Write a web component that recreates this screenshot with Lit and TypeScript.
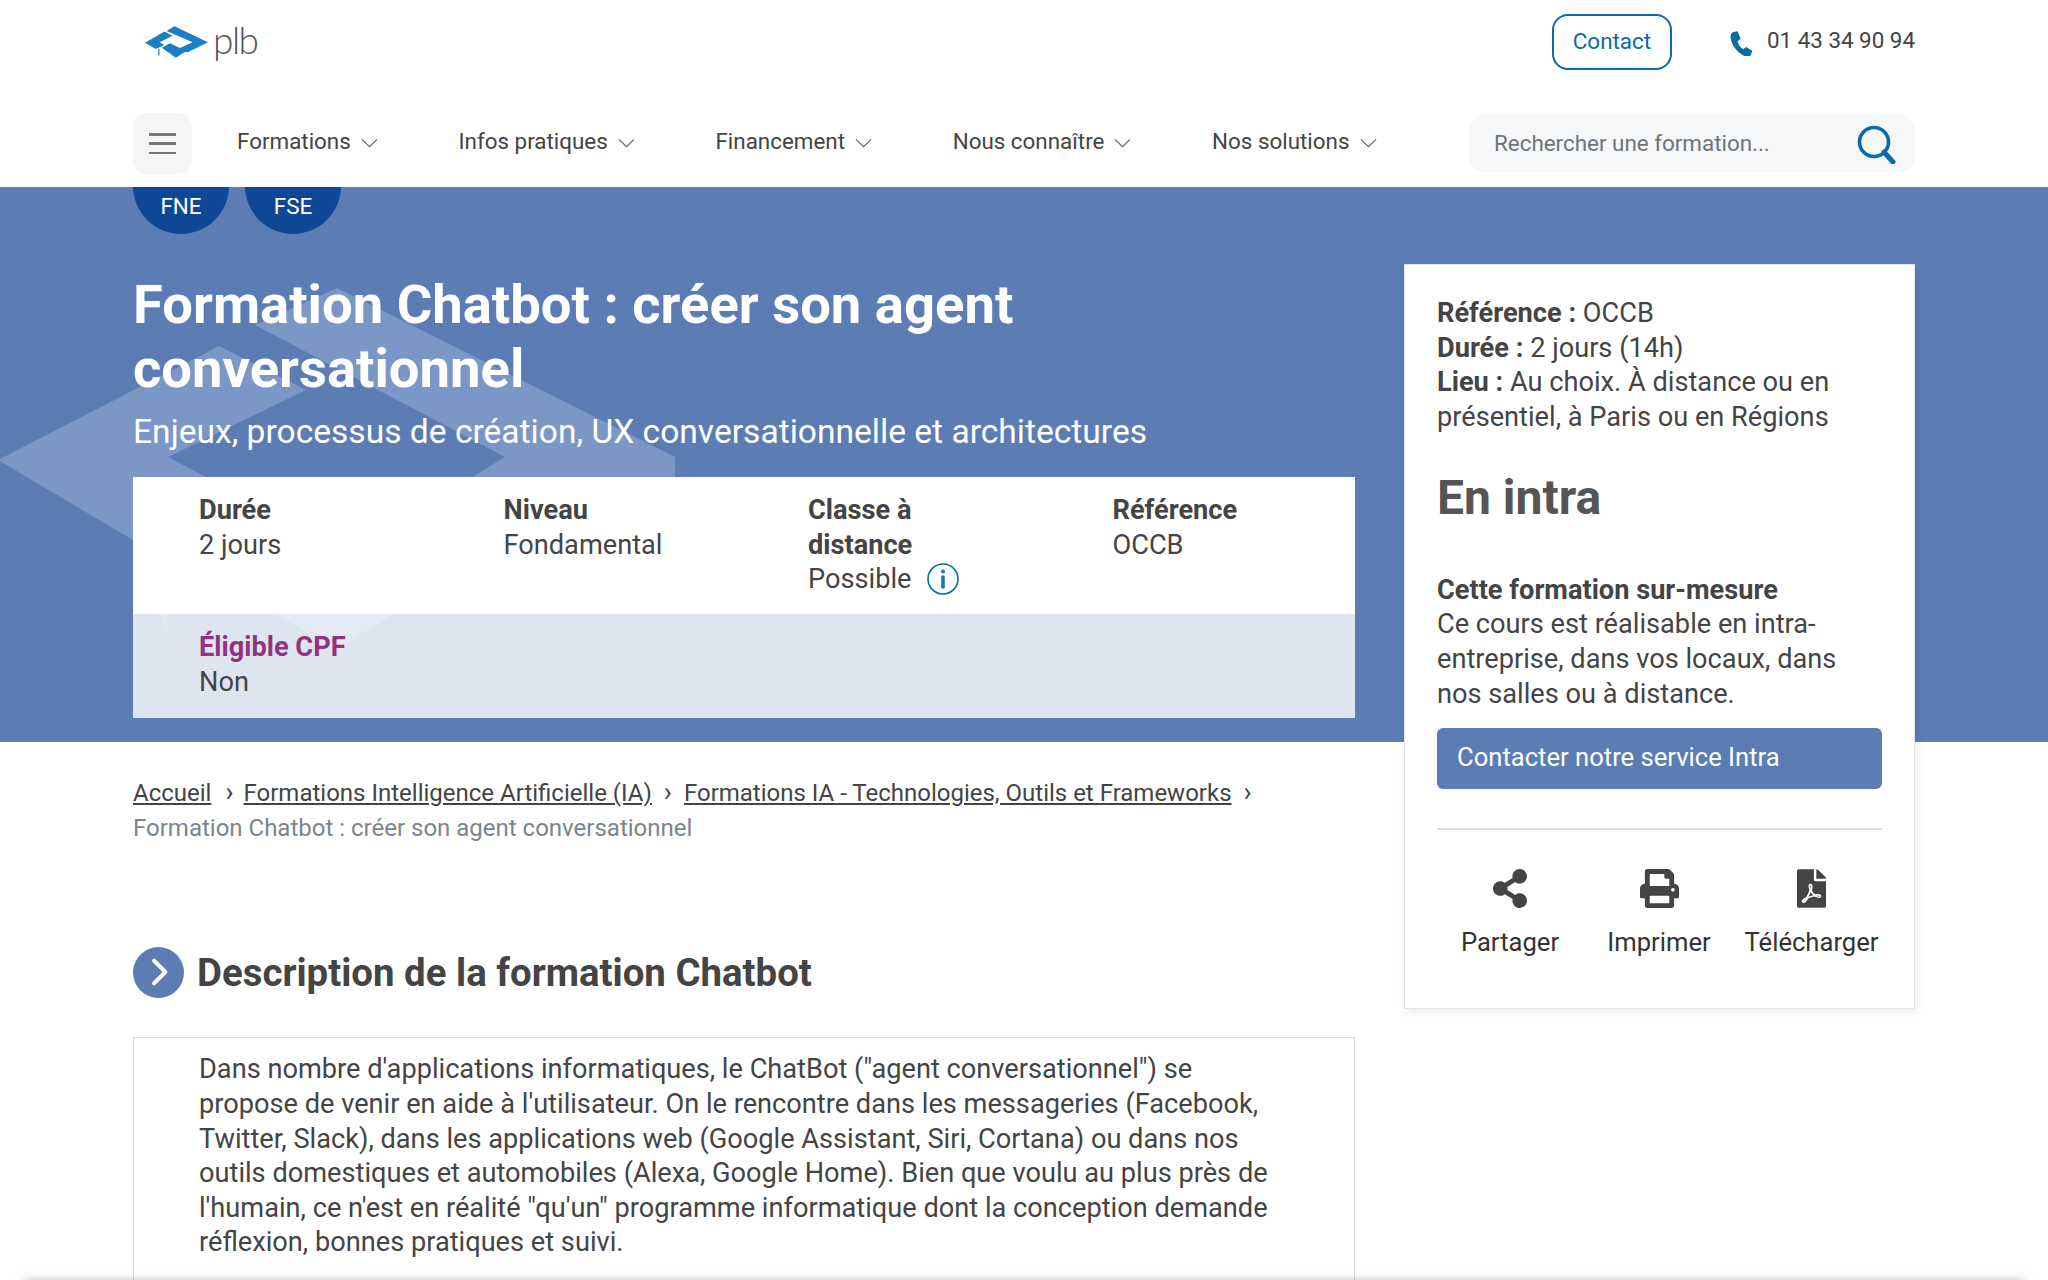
import { LitElement, html, css, svg } from "lit";
import { customElement } from "lit/decorators.js";

const chevron = html`<svg class="chev" viewBox="0 0 18 10" width="17" height="10" aria-hidden="true"><path d="M1 1.2 9 8.8 17 1.2" fill="none" stroke="#666" stroke-width="1.3"/></svg>`;

const logoIcon = html`<svg class="logo-icon" viewBox="44 36 188 94" width="63" height="32" aria-hidden="true">
  <g fill="#1b7fc4">
    <polygon points="132,36 232,84 170,114 146,102 186,84 108,50"/>
    <polygon points="44,85 102,52 126,64 88,84 102,92 76,104"/>
    <polygon points="94,100 118,87 168,110 136,130"/>
  </g>
  <path d="M85 103v20" stroke="#7b8a96" stroke-width="5" fill="none"/>
</svg>`;

const phoneIcon = html`<svg class="phone" viewBox="2.500 0.500 20 22.500" width="23" height="25" aria-hidden="true"><path fill="#0b6aa8" d="M4.6 1.6 9 .8l2.7 6.6-2.8 2.3c1 3.2 2.6 5.5 5.2 7.3l2.6-2.2 5.6 3.8-1.6 3.7c-1 1.3-3.2 1.7-5.2.9C9 20.400 3.600 13.400 2.700 6.800 2.400 4.400 3.200 2.600 4.600 1.600z"/></svg>`;

const searchIcon = html`<svg viewBox="0 0 40 40" width="40" height="40" aria-hidden="true"><circle cx="18" cy="18" r="14.5" fill="none" stroke="#0b6aa8" stroke-width="3.600"/><path d="M28 28 37 38" stroke="#0b6aa8" stroke-width="5" fill="none" stroke-linecap="round"/></svg>`;

const infoIcon = html`<svg class="info" viewBox="0 0 32 32" width="32" height="32" aria-hidden="true"><circle cx="16" cy="16" r="15" fill="none" stroke="#0b6aa8" stroke-width="1.6"/><circle cx="16" cy="8.500" r="2" fill="#1b74b4"/><rect x="14.200" y="12.500" width="3.600" height="13" rx="1" fill="#1b74b4"/></svg>`;

const shareIcon = html`<svg viewBox="0 0 448 512" width="34" height="39" aria-hidden="true"><path fill="#444" d="M352 320c-22.608 0-43.387 7.819-59.79 20.895l-102.486-64.054a96.551 96.551 0 0 0 0-41.683l102.486-64.054C308.613 184.181 329.392 192 352 192c53.019 0 96-42.981 96-96S405.019 0 352 0s-96 42.981-96 96c0 7.158.79 14.13 2.276 20.841L155.79 180.895C139.387 167.819 118.608 160 96 160c-53.019 0-96 42.981-96 96s42.981 96 96 96c22.608 0 43.387-7.819 59.79-20.895l102.486 64.054A96.301 96.301 0 0 0 256 416c0 53.019 42.981 96 96 96s96-42.981 96-96-42.981-96-96-96z"/></svg>`;

const printIcon = html`<svg viewBox="0 0 512 512" width="39" height="39" aria-hidden="true"><path fill="#444" d="M448 192V77.25c0-8.49-3.37-16.62-9.37-22.63L393.37 9.37c-6-6-14.14-9.37-22.63-9.37H96C78.33 0 64 14.33 64 32v160c-35.35 0-64 28.65-64 64v112c0 8.84 7.16 16 16 16h48v96c0 17.67 14.33 32 32 32h320c17.67 0 32-14.33 32-32v-96h48c8.84 0 16-7.16 16-16V256c0-35.35-28.65-64-64-64zm-64 256H128v-96h256v96zm0-224H128V64h192v48c0 8.84 7.16 16 16 16h48v96zm48 72c-13.25 0-24-10.75-24-24 0-13.26 10.75-24 24-24s24 10.74 24 24c0 13.25-10.75 24-24 24z"/></svg>`;

const pdfIcon = html`<svg viewBox="0 0 384 512" width="29" height="39" aria-hidden="true"><path fill="#444" d="M181.9 256.1c-5-16-4.9-46.9-2-46.9 8.4 0 7.6 36.9 2 46.9zm-1.7 47.2c-7.7 20.2-17.3 43.3-28.4 62.7 18.3-7 39-17.2 62.9-21.9-12.7-9.6-24.9-23.4-34.5-40.8zM86.1 428.1c0 .8 13.2-5.4 34.9-40.2-6.7 6.3-29.1 24.5-34.9 40.2zM248 160h136v328c0 13.3-10.7 24-24 24H24c-13.3 0-24-10.7-24-24V24C0 10.7 10.7 0 24 0h200v136c0 13.2 10.8 24 24 24zm-8 171.8c-20-12.2-33.3-29-42.7-53.8 4.5-18.5 11.6-46.6 6.2-64.2-4.7-29.4-42.4-26.5-47.8-6.8-5 18.3-.4 44.1 8.1 77-11.6 27.6-28.7 64.6-40.8 85.8-.1 0-.1.1-.2.1-27.1 13.9-73.6 44.5-54.5 68 5.6 6.9 16 10 21.5 10 17.9 0 35.7-18 61.1-61.8 25.8-8.5 54.1-19.1 79-23.2 21.7 11.8 47.1 19.5 64 19.5 29.2 0 31.2-32 19.7-43.4-13.9-13.6-54.3-9.7-73.6-7.2zM377 105L279 7c-4.5-4.5-10.6-7-17-7h-6v128h128v-6.1c0-6.3-2.5-12.4-7-16.9zm-74.1 255.3c4.1-2.7-2.5-11.9-42.8-9 37.1 15.800 42.8 9 42.8 9z"/></svg>`;

const watermark = html`<svg class="mark" viewBox="0 0 700 555" width="700" height="555" aria-hidden="true">
  <g fill="#7b97c5">
    ${svg`<polygon points="-2,273 219,159 306,203 168,270 340,360 258,428 128,350"/>
    <polygon points="337,101 255,138 505,270 440,310 675,310 675,270"/>
    <polygon points="277,427 393,427 335,463"/>
    <polygon points="161,427 167,427 168,450"/>`}
  </g>
</svg>`;

const navItems = ["Formations", "Infos pratiques", "Financement", "Nous connaître", "Nos solutions"];

@customElement("app-root")
export class AppRoot extends LitElement {
  static styles = css`
    :host {
      display: block;
      position: relative;
      width: 2048px;
      height: 1280px;
      overflow: hidden;
      background: #fff;
      font-family: Roboto, "Liberation Sans", sans-serif;
      font-size: 27.2px;
      line-height: 34.6px;
      color: #444;
    }
    a { color: inherit; }
    .header {
      position: relative;
      z-index: 2;
      height: 187px;
      background: #fff;
      padding: 0 133px;
      box-sizing: border-box;
    }
    .top {
      height: 113px;
      display: flex;
      align-items: flex-start;
    }
    .logo {
      display: flex;
      align-items: center;
      gap: 5px;
      margin: 26px 0 0 12px;
      height: 32px;
    }
    .logo-text {
      font-family: Lato, "Open Sans", sans-serif;
      font-weight: 300;
      font-size: 37px;
      line-height: 32px;
      color: #555;
      letter-spacing: -1.5px;
      margin-top: -5px;
    }
    .contact {
      margin: 14px 0 0 auto;
      width: 120px;
      height: 56px;
      box-sizing: border-box;
      border: 2px solid #0b6aa8;
      border-radius: 16px;
      color: #0b6aa8;
      font-size: 22.4px;
      display: flex;
      align-items: center;
      justify-content: center;
      padding-bottom: 2px;
    }
    .tel {
      margin: 23px 0 0 58px;
      display: flex;
      align-items: center;
      gap: 14px;
      font-size: 22.4px;
    }
    .phone { margin-top: 6px; }
    .nav {
      display: flex;
      align-items: flex-start;
    }
    .burger {
      width: 59px;
      height: 61px;
      box-sizing: border-box;
      border-radius: 14px;
      background: #f4f5f6;
      padding: 20px 16px;
      display: flex;
      flex-direction: column;
      justify-content: space-between;
      margin-right: 45px;
    }
    .burger span { display: block; height: 2.500px; background: #777; }
    .menu {
      display: flex;
      gap: 80.7px;
      font-size: 22.4px;
      margin-top: 11px;
    }
    .menu span { display: flex; align-items: center; gap: 10px; white-space: nowrap; }
    .chev { margin-top: 4px; }
    .search {
      margin-left: auto;
      width: 446px;
      height: 57px;
      margin-top: 2px;
      box-sizing: border-box;
      padding: 0 19px 0 25px;
      background: #f6f7f8;
      border-radius: 16px;
      display: flex;
      align-items: center;
      justify-content: space-between;
      color: #6f7478;
      font-size: 22.4px;
    }
    .body {
      position: relative;
      display: grid;
      grid-template-columns: 1222px 511px;
      gap: 49px;
      padding: 0 133px;
    }
    .hero-bg {
      position: absolute;
      left: 0;
      right: 0;
      top: 0;
      height: 555px;
      background: #5b7db4;
      overflow: hidden;
    }
    .mark { display: block; }
    .main, .aside { position: relative; }
    .badges {
      display: flex;
      gap: 16px;
      margin-top: -49px;
    }
    .badge {
      width: 96px;
      height: 96px;
      border-radius: 50%;
      background: #0f4797;
      color: #fff;
      font-size: 22.4px;
      display: flex;
      align-items: flex-end;
      justify-content: center;
      padding-bottom: 10px;
      box-sizing: border-box;
    }
    h1 {
      margin: 39px 0 0;
      color: #fff;
      font-size: 54.4px;
      line-height: 64px;
      font-weight: 700;
    }
    .sub {
      color: #fff;
      font-size: 33.6px;
      line-height: 44px;
      margin: 9px 0 23px;
    }
    .table { display: block; }
    .row1 {
      background: #fff;
      padding: 16px 0 17px 66px;
      display: grid;
      grid-template-columns: 304.500px 304.500px 304.500px 1fr;
    }
    .row2 {
      background: rgba(255, 255, 255, 0.8);
      padding: 16.5px 0 18.5px 66px;
    }
    .cell b { display: block; font-weight: 700; }
    .cell.narrow { max-width: 200px; }
    .cpf { color: #93327f; }
    .possible { display: flex; align-items: center; gap: 16px; white-space: nowrap; }
    .crumbs {
      margin-top: 58px;
      font-size: 24px;
      line-height: 35px;
    }
    .crumbs .sep { margin: 0 12px; font-size: 27px; line-height: 1; }
    .crumbs .sep:first-of-type { margin: 0 10px 0 14px; }
    .crumbs .cur { color: #7b858c; display: block; }
    .title {
      margin-top: 101px;
      display: flex;
      align-items: center;
      gap: 13px;
    }
    .round {
      width: 51px;
      height: 51px;
      border-radius: 50%;
      background: #5b7db4;
      display: flex;
      align-items: center;
      justify-content: center;
    }
    h2 {
      margin: 0;
      font-size: 38.4px;
      line-height: 51px;
      font-weight: 700;
      color: #444;
    }
    .desc {
      margin-top: 39px;
      border: 1px solid #ddd;
      padding: 14.5px 66px 40px 65px;
    }
    .aside {
      margin-top: 77px;
    }
    .card {
      background: #fff;
      border: 1px solid #e4e4e4;
      box-shadow: 2px 3px 8px rgba(0, 0, 0, 0.08);
      box-sizing: border-box;
      height: 745px;
      padding: 31px 32px 0;
    }
    .card b { font-weight: 700; }
    h3 {
      margin: 34px 0 44.5px;
      font-size: 48px;
      line-height: 60px;
      font-weight: 700;
      color: #555;
    }
    .btn {
      margin-top: 16.5px;
      height: 61px;
      box-sizing: border-box;
      padding: 0 20px 1px;
      background: #5b7db4;
      border-radius: 6px;
      color: #fff;
      font-size: 25.6px;
      display: flex;
      align-items: center;
    }
    .divider { height: 2px; background: #ddd; margin: 39px 0; }
    .actions {
      display: grid;
      grid-template-columns: 148px 150px 155px;
      margin-left: -1px;
      font-size: 25.6px;
    }
    .action {
      display: flex;
      flex-direction: column;
      align-items: center;
      gap: 17px;
      white-space: nowrap;
      color: #333;
    }
    .action svg { display: block; }
    .foot {
      position: absolute;
      left: 24px;
      right: 24px;
      bottom: -12px;
      height: 12px;
      box-shadow: 0 0 10px rgba(0, 0, 0, 0.25);
    }
  `;

  render() {
    return html`
      <div class="header">
        <div class="top">
          <div class="logo">${logoIcon}<span class="logo-text">plb</span></div>
          <div class="contact">Contact</div>
          <div class="tel">${phoneIcon}<span>01 43 34 90 94</span></div>
        </div>
        <div class="nav">
          <div class="burger"><span></span><span></span><span></span></div>
          <div class="menu">${navItems.map((n) => html`<span>${n}${chevron}</span>`)}</div>
          <div class="search"><span>Rechercher une formation...</span>${searchIcon}</div>
        </div>
      </div>
      <div class="body">
        <div class="hero-bg">${watermark}</div>
        <div class="main">
          <div class="badges"><div class="badge">FNE</div><div class="badge">FSE</div></div>
          <h1>Formation Chatbot : créer son agent conversationnel</h1>
          <div class="sub">Enjeux, processus de création, UX conversationnelle et architectures</div>
          <div class="table">
            <div class="row1">
              <div class="cell"><b>Durée</b>2 jours</div>
              <div class="cell"><b>Niveau</b>Fondamental</div>
              <div class="cell narrow"><b>Classe à distance</b><span class="possible">Possible ${infoIcon}</span></div>
              <div class="cell"><b>Référence</b>OCCB</div>
            </div>
            <div class="row2 cell"><b class="cpf">Éligible CPF</b>Non</div>
          </div>
          <div class="crumbs">
            <a href="#">Accueil</a><span class="sep">›</span><a href="#">Formations Intelligence Artificielle (IA)</a><span class="sep">›</span><a href="#">Formations IA - Technologies, Outils et Frameworks</a><span class="sep">›</span>
            <span class="cur">Formation Chatbot : créer son agent conversationnel</span>
          </div>
          <div class="title">
            <div class="round"><svg viewBox="0 0 24 24" width="34" height="34" aria-hidden="true"><path d="M8.500 4 16.500 12 8.500 20" fill="none" stroke="#fff" stroke-width="2.800" stroke-linecap="round" stroke-linejoin="round"/></svg></div>
            <h2>Description de la formation Chatbot</h2>
          </div>
          <div class="desc">Dans nombre d'applications informatiques, le ChatBot ("agent conversationnel") se propose de venir en aide à l'utilisateur. On le rencontre dans les messageries (Facebook, Twitter, Slack), dans les applications web (Google Assistant, Siri, Cortana) ou dans nos outils domestiques et automobiles (Alexa, Google Home). Bien que voulu au plus près de l'humain, ce n'est en réalité "qu'un" programme informatique dont la conception demande réflexion, bonnes pratiques et suivi.</div>
        </div>
        <div class="aside">
          <div class="card">
            <div><b>Référence :</b> OCCB</div>
            <div><b>Durée :</b> 2 jours (14h)</div>
            <div><b>Lieu :</b> Au choix. À distance ou en présentiel, à Paris ou en Régions</div>
            <h3>En intra</h3>
            <div><b>Cette formation sur-mesure</b></div>
            <div>Ce cours est réalisable en intra-entreprise, dans vos locaux, dans nos salles ou à distance.</div>
            <div class="btn">Contacter notre service Intra</div>
            <div class="divider"></div>
            <div class="actions">
              <div class="action">${shareIcon}<span>Partager</span></div>
              <div class="action">${printIcon}<span>Imprimer</span></div>
              <div class="action">${pdfIcon}<span>Télécharger</span></div>
            </div>
          </div>
        </div>
      </div>
      <div class="foot"></div>
    `;
  }
}
